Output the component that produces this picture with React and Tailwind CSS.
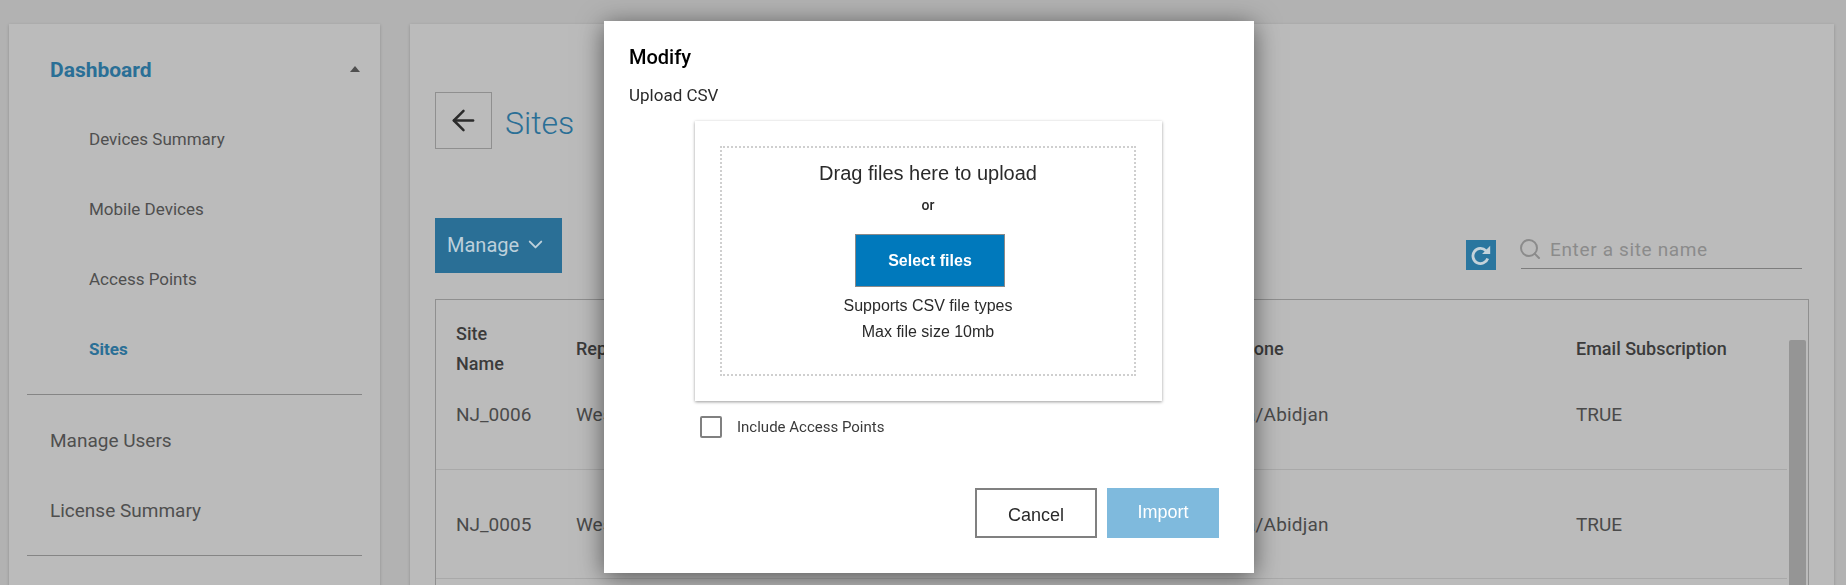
import { ArrowLeft, ChevronDown, Search } from "lucide-react";

const font = "font-['Roboto',sans-serif]";

function NavItem({ children, active, sub }) {
  return (
    <div
      className={`flex h-[70px] items-center ${sub ? "pl-[80px] text-[17px]" : "pl-[41px] pt-[1px] text-[19px]"} ${
        active ? "font-bold text-[#2a6f96]" : "text-[#4f4f4f]"
      }`}
    >
      {children}
    </div>
  );
}

function Sidebar() {
  return (
    <aside className="h-[600px] w-[371px] shrink-0 bg-[#bbbbbb] shadow-[0_1px_3px_rgba(0,0,0,0.2)]">
      <div className="pt-[11px]">
        <div className="flex h-[70px] items-center justify-between pl-[41px] pr-[20px]">
          <span className="mt-[2px] text-[21px] font-bold text-[#2a6f96]">Dashboard</span>
          <span className="mb-[2px] h-0 w-0 border-x-[5px] border-b-[6px] border-x-transparent border-b-[#4f4f4f]" />
        </div>
        <NavItem sub>Devices Summary</NavItem>
        <NavItem sub>Mobile Devices</NavItem>
        <NavItem sub>Access Points</NavItem>
        <NavItem sub active>Sites</NavItem>
        <div className="mx-[18px] mt-[9px] border-t border-[#858585]" />
        <div className="mt-[11px]">
          <NavItem>Manage Users</NavItem>
          <NavItem>License Summary</NavItem>
        </div>
        <div className="mx-[18px] mt-[9px] border-t border-[#858585]" />
      </div>
    </aside>
  );
}

function Row({ id, className }) {
  return (
    <div className={`mr-[21px] flex items-center border-b border-[#a9a9a9] text-[19px] text-[#4a4a4a] ${className}`}>
      <div className="w-[120px] shrink-0 pl-[20px] box-content">{id}</div>
      <div className="flex-1">West</div>
      <div className="w-[372px] tracking-[0.2px]">Africa/Abidjan</div>
      <div className="w-[211px]">TRUE</div>
    </div>
  );
}

function SitesPanel() {
  return (
    <main className="h-[600px] w-[1424px] shrink-0 bg-[#bbbbbb] px-[25px] pt-[68px] shadow-[0_1px_3px_rgba(0,0,0,0.2)]">
      <div className="flex items-center">
        <button className="flex h-[57px] w-[57px] items-center justify-center border border-[#8f8f8f] text-[#2b2b2b]">
          <ArrowLeft size={33} strokeWidth={1.8} />
        </button>
        <h1 className="ml-[13px] mt-[4px] text-[32px] font-light text-[#2a6f96]">Sites</h1>
      </div>

      <div className="mt-[69px] flex h-[56px] items-start justify-between">
        <button className="flex h-[55px] w-[127px] items-center gap-[5px] bg-[#2a6f96] pb-[2px] pl-[12px] text-[20px] text-[#bdd0db]">
          Manage
          <ChevronDown size={23} strokeWidth={2} />
        </button>
        <div className="mr-[7px] mt-[12px] flex items-start">
          <div className="mt-[10px] flex h-[30px] w-[30px] items-center justify-center bg-[#2a769f]">
            <svg width="26" height="26" viewBox="0 0 24 24" fill="none" stroke="#c4d2da" strokeWidth="2.6">
              <path d="M18.2 15.2a7 7 0 1 1-1.6-7.2" />
              <path d="M20.5 3.5v7.5h-7.5z" fill="#c4d2da" stroke="none" />
            </svg>
          </div>
          <div className="ml-[25px] flex h-[39px] w-[281px] items-end gap-[7px] border-b border-[#7d7d7d] pb-[6px] text-[#8b8b8b]">
            <Search size={24} strokeWidth={2} className="mb-[1px] ml-[-3px]" />
            <span className="ml-[1px] text-[19px] leading-[24px] tracking-[0.65px]">Enter a site name</span>
          </div>
        </div>
      </div>

      <div className="relative mt-[25px] h-[300px] border border-[#8f8f8f]">
        <div className="mr-[21px] mt-[19px] mb-[1px] flex h-[60px] items-center text-[18px] font-medium leading-[30px] text-[#3b3b3b]">
          <div className="w-[120px] shrink-0 pl-[20px] box-content">Site<br />Name</div>
          <div className="flex-1">Report Group</div>
          <div className="w-[372px]">Timezone</div>
          <div className="w-[211px]">Email Subscription</div>
        </div>
        <Row id="NJ_0006" className="h-[90px] pb-[18px]" />
        <Row id="NJ_0005" className="h-[109px] pt-[2px]" />
        <div className="absolute right-[2px] top-[40px] h-[260px] w-[17px] rounded-t-[2px] bg-[#959595]" />
      </div>
    </main>
  );
}

function UploadModal() {
  return (
    <div className="fixed left-[604px] top-[21px] h-[552px] w-[650px] bg-white px-[25px] pt-[24px] shadow-[0_4px_24px_rgba(0,0,0,0.55)]">
      <h2 className="text-[20px] font-medium leading-[24px] text-black">Modify</h2>
      <p className="mt-[16px] text-[17px] leading-[20px] text-[#2a2a2a]">Upload CSV</p>

      <div className="ml-[66px] mt-[16px] h-[280px] w-[467px] bg-white px-[25px] pt-[25px] shadow-[0_1px_3px_rgba(0,0,0,0.4)]">
        <div className="flex h-[230px] w-[416px] flex-col items-center border-2 border-dotted border-[#cfcfcf] font-['Liberation_Sans',sans-serif] text-[#2a2a2a]">
          <p className="mt-[13px] text-[20px] leading-[24px]">Drag files here to upload</p>
          <p className="mt-[12px] font-['Roboto',sans-serif] text-[14px] font-medium leading-[16px]">or</p>
          <button className="ml-[4px] mt-[21px] h-[53px] w-[150px] border border-[#8a8a8a] bg-[#0079bc] text-[16px] font-bold text-white">
            Select files
          </button>
          <p className="mt-[6px] text-center text-[16px] leading-[26px]">
            Supports CSV file types<br />Max file size 10mb
          </p>
        </div>
      </div>

      <label className="ml-[71px] mt-[15px] flex items-center gap-[15px]">
        <span className="h-[22px] w-[22px] rounded-[2px] border-2 border-[#808080]" />
        <span className="text-[15px] text-[#3a3a3a]">Include Access Points</span>
      </label>

      <div className="mr-[10px] mt-[49px] flex justify-end gap-[10px] font-['Liberation_Sans',sans-serif] text-[18px]">
        <button className="h-[50px] w-[122px] border-2 border-[#808080] pt-[6px] text-[#2a2a2a]">Cancel</button>
        <button className="h-[50px] w-[112px] bg-[#7fbadd] text-white">Import</button>
      </div>
    </div>
  );
}

export default function App() {
  return (
    <div className={`${font} relative flex h-[585px] w-[1846px] gap-[30px] overflow-hidden bg-[#b2b2b2] pl-[9px] pt-[24px]`}>
      <Sidebar />
      <SitesPanel />
      <UploadModal />
    </div>
  );
}
